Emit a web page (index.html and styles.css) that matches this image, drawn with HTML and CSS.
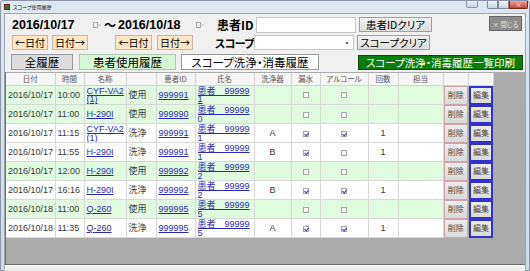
FILE: index.html
```html
<!DOCTYPE html>
<html lang="ja">
<head>
<meta charset="utf-8">
<link rel="stylesheet" href="styles.css">
</head>
<body>
<div class="win">
  <div class="titlebar">
    <span class="appicon"></span>
    <span class="title">スコープ使用履歴</span>
    <span class="tb-extra"></span>
    <div class="ctrls">
      <span class="cbtn min"></span><span class="cbtn max"></span><span class="cbtn close">×</span>
    </div>
  </div>
  <div class="client">
    <div class="row r1">
      <div class="date d1">2016/10/17</div>
      <span class="dd"><svg width="8" height="6" viewBox="0 0 8 6"><rect x="0.5" y="0.5" width="4" height="5" fill="#eee" stroke="#aaa"/><rect x="5.5" y="2.5" width="2" height="1" fill="#aaa"/></svg></span>
      <div class="tilde">～</div>
      <div class="date d2">2016/10/18</div>
      <span class="dd"><svg width="8" height="6" viewBox="0 0 8 6"><rect x="0.5" y="0.5" width="4" height="5" fill="#eee" stroke="#aaa"/><rect x="5.5" y="2.5" width="2" height="1" fill="#aaa"/></svg></span>
      <div class="lbl l1">患者ID</div>
      <div class="inp"></div>
      <div class="btn gray clr">患者IDクリア</div>
      <div class="btn closebtn">× 閉じる</div>
    </div>
    <div class="row r2">
      <div class="btn peach p1">←日付</div>
      <div class="btn peach p2">日付→</div>
      <div class="btn peach p3">←日付</div>
      <div class="btn peach p4">日付→</div>
      <div class="lbl l2">スコープ</div>
      <div class="inp combo"><span class="dot">·</span></div>
      <div class="btn gray clr">スコープクリア</div>
    </div>
    <div class="row r3">
      <div class="btn tab all">全履歴</div>
      <div class="btn tab use">患者使用履歴</div>
      <div class="btn tab wash">スコープ洗浄・消毒履歴</div>
      <div class="btn print">スコープ洗浄・消毒履歴一覧印刷</div>
    </div>
    <div class="sub">
      <table class="grid">
        <colgroup>
          <col style="width:49px"><col style="width:29px"><col style="width:42px"><col style="width:30px"><col style="width:39px"><col style="width:59px"><col style="width:37px"><col style="width:29px"><col style="width:48px"><col style="width:30px"><col style="width:45px"><col style="width:25px"><col style="width:25px">
        </colgroup>
        <thead>
          <tr><th>日付</th><th>時間</th><th>名称</th><th></th><th>患者ID</th><th>氏名</th><th>洗浄器</th><th>漏水</th><th>アルコール</th><th>回数</th><th>担当</th><th></th><th></th></tr>
        </thead>
        <tbody>
          <tr class="g"><td>2016/10/17</td><td>10:00</td><td><div class="wrap"><a href="#">CYF-VA2<wbr>(1)</a></div></td><td>使用</td><td><a href="#">999991</a></td><td><div class="wrap"><a href="#">患者　99999<wbr>1</a></div></td><td class="c"></td><td class="c"><span class="cb"></span></td><td class="c"><span class="cb"></span></td><td class="c"></td><td></td><td class="bt"><span class="del">削除</span></td><td class="bt"><span class="edit">編集</span></td></tr>
          <tr class="g"><td>2016/10/17</td><td>11:00</td><td><a href="#">H-290I</a></td><td>使用</td><td><a href="#">999990</a></td><td><div class="wrap"><a href="#">患者　99999<wbr>0</a></div></td><td class="c"></td><td class="c"><span class="cb"></span></td><td class="c"><span class="cb"></span></td><td class="c"></td><td></td><td class="bt"><span class="del">削除</span></td><td class="bt"><span class="edit">編集</span></td></tr>
          <tr><td>2016/10/17</td><td>11:15</td><td><div class="wrap"><a href="#">CYF-VA2<wbr>(1)</a></div></td><td>洗浄</td><td><a href="#">999991</a></td><td><div class="wrap"><a href="#">患者　99999<wbr>1</a></div></td><td class="c">A</td><td class="c"><span class="cb on"></span></td><td class="c"><span class="cb on"></span></td><td class="c">1</td><td></td><td class="bt"><span class="del">削除</span></td><td class="bt"><span class="edit">編集</span></td></tr>
          <tr><td>2016/10/17</td><td>11:55</td><td><a href="#">H-290I</a></td><td>洗浄</td><td><a href="#">999991</a></td><td><div class="wrap"><a href="#">患者　99999<wbr>1</a></div></td><td class="c">B</td><td class="c"><span class="cb on"></span></td><td class="c"><span class="cb"></span></td><td class="c">1</td><td></td><td class="bt"><span class="del">削除</span></td><td class="bt"><span class="edit">編集</span></td></tr>
          <tr class="g"><td>2016/10/17</td><td>12:00</td><td><a href="#">H-290I</a></td><td>使用</td><td><a href="#">999992</a></td><td><div class="wrap"><a href="#">患者　99999<wbr>2</a></div></td><td class="c"></td><td class="c"><span class="cb"></span></td><td class="c"><span class="cb"></span></td><td class="c"></td><td></td><td class="bt"><span class="del">削除</span></td><td class="bt"><span class="edit">編集</span></td></tr>
          <tr><td>2016/10/17</td><td>16:16</td><td><a href="#">H-290I</a></td><td>洗浄</td><td><a href="#">999992</a></td><td><div class="wrap"><a href="#">患者　99999<wbr>2</a></div></td><td class="c">B</td><td class="c"><span class="cb on"></span></td><td class="c"><span class="cb on"></span></td><td class="c">1</td><td></td><td class="bt"><span class="del">削除</span></td><td class="bt"><span class="edit">編集</span></td></tr>
          <tr class="g"><td>2016/10/18</td><td>11:00</td><td><a href="#">Q-260</a></td><td>使用</td><td><a href="#">999995</a></td><td><div class="wrap"><a href="#">患者　99999<wbr>5</a></div></td><td class="c"></td><td class="c"><span class="cb"></span></td><td class="c"><span class="cb"></span></td><td class="c"></td><td></td><td class="bt"><span class="del">削除</span></td><td class="bt"><span class="edit">編集</span></td></tr>
          <tr><td>2016/10/18</td><td>11:35</td><td><a href="#">Q-260</a></td><td>洗浄</td><td><a href="#">999995</a></td><td><div class="wrap"><a href="#">患者　99999<wbr>5</a></div></td><td class="c">A</td><td class="c"><span class="cb on"></span></td><td class="c"><span class="cb on"></span></td><td class="c">1</td><td></td><td class="bt"><span class="del">削除</span></td><td class="bt"><span class="edit">編集</span></td></tr>
        </tbody>
      </table>
    </div>
    <div class="footer"></div>
  </div>
</div>
</body>
</html>
```
FILE: styles.css
```css
* { box-sizing: border-box; }
html, body { margin: 0; padding: 0; }
body {
  width: 530px; height: 271px; overflow: hidden;
  font-family: "Noto Sans CJK JP", "Noto Sans", sans-serif;
  font-feature-settings: "palt";
  background: #fff;
}
.win {
  width: 530px; height: 271px;
  background: linear-gradient(#dfe7f0, #cfdbe8);
  border: 1px solid #8a96a4;
  border-radius: 3px 3px 0 0;
  display: flex; flex-direction: column;
}
.titlebar {
  height: 11px; display: flex; align-items: center; position: relative;
}
.appicon {
  width: 6px; height: 6px; margin-left: 3px;
  background: #2a7a2a; border: 1px solid #7a1a1a;
}
.title { font-size: 5px; margin-left: 3px; color: #222; line-height: 6px; }
.tb-extra {
  position: absolute; left: 465px; top: 0; width: 12px; height: 7px;
  background: linear-gradient(#e8eef5, #c8d2de); border: 1px solid #8a96a4; border-top: 0; border-radius: 0 0 2px 2px;
}
.ctrls { position: absolute; left: 486px; top: 0; display: flex; }
.cbtn {
  height: 8px; width: 11px; border: 1px solid #7f8b99; border-top: 0;
  background: linear-gradient(#eef2f6, #c9d3df);
  font-size: 6px; line-height: 7px; color: #fff; text-align: center;
}
.cbtn.min { border-radius: 0 0 0 2px; }
.cbtn.close { width: 19px; background: linear-gradient(#e8a49a, #c84230); border-color: #7a2a20; border-radius: 0 0 2px 0; }
.client {
  margin: 1px 3px 0 3px; background: #f0f0f0;
  height: 256px; display: flex; flex-direction: column;
  border: 1px solid #9aa6b3; border-bottom: 0;
}
.row { display: flex; align-items: center; flex: none; white-space: nowrap; }
.r1 { margin-top: 2px; height: 17px; }
.r2 { margin-top: 2px; height: 15px; }
.r3 { margin-top: 4px; height: 16px; }
.date { font-family: "Liberation Sans", "Noto Sans CJK JP", sans-serif; font-size: 12.5px; font-weight: bold; color: #000; }
.d1 { margin-left: 7px; width: 81px; }
.d2 { margin-left: 2px; width: 78px; }
.dd { width: 8px; height: 6px; display: flex; }
.tilde { margin-left: 3px; width: 12px; font-size: 12px; font-weight: bold; }
.lbl { font-size: 12px; font-weight: bold; color: #000; width: 39px; white-space: nowrap; }
.l1 { margin-left: 13px; }
.l2 { margin-left: 22px; font-size: 11px; letter-spacing: -0.6px; }
.inp { width: 100px; height: 16px; background: #fff; border: 1px solid #c8c8c8; position: relative; }
.r2 .inp { height: 15px; }
.inp .dot { position: absolute; right: 3px; top: 1px; font-size: 10px; line-height: 12px; font-weight: bold; color: #333; }
.btn {
  height: 100%; display: flex; align-items: center; justify-content: center;
  white-space: nowrap; color: #000; border: 1px solid #a0a0a0;
}
.gray {
  background: linear-gradient(#f2f2f2, #dcdcdc);
  font-size: 10.5px; margin-left: 3px; width: 73px;
}
.r1 .gray { height: 15px; }
.closebtn {
  margin-left: 57px; width: 33px; height: 15px;
  background: #8c8c8c; border: 1px solid #666; color: #e6e6e6;
  font-size: 6.5px; align-self: flex-start; margin-top: 0px;
}
.peach {
  background: #fde6c4; border: 1px solid #c8b8a0;
  font-size: 10px; width: 36px;
}
.p1 { margin-left: 7px; }
.p2 { margin-left: 4px; }
.p3 { margin-left: 27px; width: 37px; }
.p4 { margin-left: 5px; }
.tab { font-size: 11.5px; }
.all { margin-left: 6px; width: 62px; background: #dcdcdc; border-color: #9a9a9a; }
.use { margin-left: 6px; width: 97px; background: #d4f7d4; border-color: #b0c8b0; }
.wash { margin-left: 5px; width: 138px; background: #fff; border-color: #9a9a9a; }
.print {
  margin-left: 39px; width: 165px; height: 15px; font-size: 10.5px;
  background: #0a7d0a; border: 1px solid #0a4a0a; color: #fff;
}
.sub {
  margin-top: 2px; height: 193px; flex: none;
  background: #ababab;
  border-left: 1px solid #6e6e6e; border-bottom: 1px solid #6e6e6e;
  padding-top: 1px;
}
.grid {
  border-collapse: collapse; table-layout: fixed; width: 487px;
  font-family: "Liberation Sans", "Noto Sans CJK JP", sans-serif;
  font-size: 9px; color: #3a3a3a;
}
.grid th {
  height: 12px; font-weight: normal; font-size: 7.5px; color: #555;
  font-family: "Noto Sans CJK JP", sans-serif;
  background: #f6f6f6; border-right: 1px solid #d4d4d4; border-bottom: 1px solid #d4d4d4;
  padding: 0; line-height: 11px;
}
.grid td {
  height: 19px; padding: 0 0 0 2px; background: #fff;
  border-right: 1px solid #d8d8d8; border-bottom: 1px solid #d8d8d8;
  white-space: nowrap; overflow: hidden; vertical-align: middle;
  line-height: 10px;
}
.grid tr.g td { background: #e0fbdf; }
.grid td.c { text-align: center; padding: 0; }
.grid td.bt { padding: 0; background: #ababab !important; border-right: 0; border-bottom: 0; }
.grid a { color: #2b2bb8; text-decoration: underline; }
.wrap {
  white-space: normal; height: 18px; overflow: hidden;
  line-height: 8.5px; padding-top: 1px;
}
.cb {
  display: inline-block; width: 6px; height: 6px; border: 1px solid #a8a8a8;
  background: #f4f4f4; vertical-align: middle; position: relative;
}
.cb.on::after {
  content: ""; position: absolute; left: 1px; top: 0px; width: 2px; height: 3px;
  border-right: 1px solid #3a3ab0; border-bottom: 1px solid #3a3ab0; transform: rotate(40deg);
}
.del, .edit {
  display: flex; align-items: center; justify-content: center;
  height: 19px; font-size: 8px; color: #444;
  font-family: "Noto Sans CJK JP", sans-serif;
  background: linear-gradient(#ededed, #dadada);
}
.del { border: 1px solid #cfa3a8; }
.edit { border: 2px solid #3232c8; margin-left: 1px; }
.footer { height: 6px; flex: none; background: #f0f0f0; border-top: 1px solid #fff; }
```
